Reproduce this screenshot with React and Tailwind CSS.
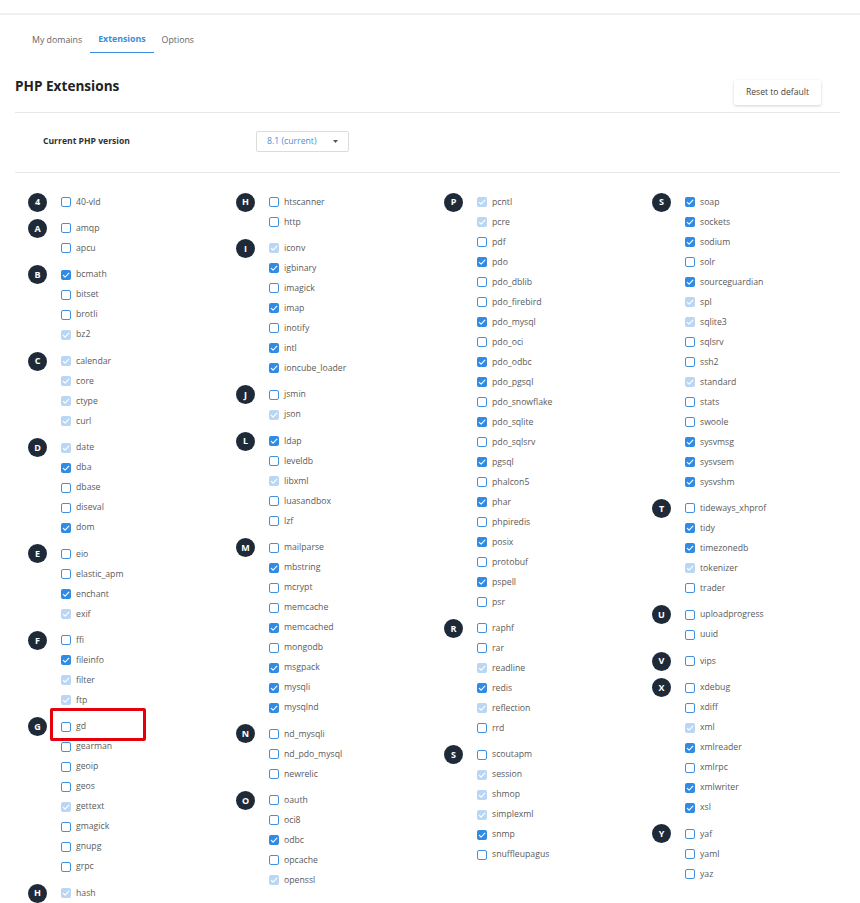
import React from "react";

const F = { fontFamily: '"Open Sans", "Noto Sans", sans-serif' };

const cols = [
  [
    ["4", "40-vld:0"],
    ["A", "amqp:0 apcu:0"],
    ["B", "bcmath:1 bitset:0 brotli:0 bz2:2"],
    ["C", "calendar:2 core:2 ctype:2 curl:2"],
    ["D", "date:2 dba:1 dbase:0 diseval:0 dom:1"],
    ["E", "eio:0 elastic_apm:0 enchant:1 exif:2"],
    ["F", "ffi:0 fileinfo:1 filter:2 ftp:2"],
    ["G", "gd:0 gearman:0 geoip:0 geos:0 gettext:2 gmagick:0 gnupg:0 grpc:0"],
    ["H", "hash:2"],
  ],
  [
    ["H", "htscanner:0 http:0"],
    ["I", "iconv:2 igbinary:1 imagick:0 imap:1 inotify:0 intl:1 ioncube_loader:1"],
    ["J", "jsmin:0 json:2"],
    ["L", "ldap:1 leveldb:0 libxml:2 luasandbox:0 lzf:0"],
    ["M", "mailparse:0 mbstring:1 mcrypt:0 memcache:0 memcached:1 mongodb:0 msgpack:1 mysqli:1 mysqlnd:1"],
    ["N", "nd_mysqli:0 nd_pdo_mysql:0 newrelic:0"],
    ["O", "oauth:0 oci8:0 odbc:1 opcache:0 openssl:2"],
  ],
  [
    ["P", "pcntl:2 pcre:2 pdf:0 pdo:1 pdo_dblib:0 pdo_firebird:0 pdo_mysql:1 pdo_oci:0 pdo_odbc:1 pdo_pgsql:1 pdo_snowflake:0 pdo_sqlite:1 pdo_sqlsrv:0 pgsql:1 phalcon5:0 phar:1 phpiredis:0 posix:1 protobuf:0 pspell:1 psr:0"],
    ["R", "raphf:0 rar:0 readline:2 redis:1 reflection:2 rrd:0"],
    ["S", "scoutapm:0 session:2 shmop:2 simplexml:2 snmp:1 snuffleupagus:0"],
  ],
  [
    ["S", "soap:1 sockets:1 sodium:1 solr:0 sourceguardian:1 spl:2 sqlite3:2 sqlsrv:0 ssh2:0 standard:2 stats:0 swoole:0 sysvmsg:1 sysvsem:1 sysvshm:1"],
    ["T", "tideways_xhprof:0 tidy:1 timezonedb:1 tokenizer:2 trader:0"],
    ["U", "uploadprogress:0 uuid:0"],
    ["V", "vips:0"],
    ["X", "xdebug:0 xdiff:0 xml:2 xmlreader:1 xmlrpc:0 xmlwriter:1 xsl:1"],
    ["Y", "yaf:0 yaml:0 yaz:0"],
  ],
];

function Box({ s }) {
  if (s === 0) {
    return <span className="w-[10px] h-[10px] rounded-[2px] border border-[#3f91dd] bg-white shrink-0" />;
  }
  const bg = s === 1 ? "bg-[#2f8be3]" : "bg-[#b9d7f4]";
  return (
    <span className={`w-[10px] h-[10px] rounded-[2px] ${bg} shrink-0 flex items-center justify-center`}>
      <svg width="10" height="10" viewBox="0 0 10 10">
        <path d="M2.3 5.3 L4.1 7.1 L7.9 3.1" fill="none" stroke="white" strokeWidth="1.1" strokeLinecap="round" strokeLinejoin="round" />
      </svg>
    </span>
  );
}

function Group({ letter, items }) {
  const list = items.split(" ").map((t) => {
    const [n, s] = t.split(":");
    return [n, Number(s)];
  });
  return (
    <div className="flex mb-[6.4px]">
      <div className="w-[19px] h-[19px] mt-[0.5px] rounded-full bg-[#1f2a38] text-white text-[9px] font-bold flex items-center justify-center shrink-0">
        {letter}
      </div>
      <div className="ml-[14px] flex flex-col">
        {list.map(([n, s]) => (
          <div key={n} className="h-5 flex items-center gap-[5px]">
            <Box s={s} />
            <span className="text-[8.7px] text-[#5a5a5a] leading-none">{n}</span>
          </div>
        ))}
      </div>
    </div>
  );
}

export default function App() {
  return (
    <div className="relative bg-white w-[860px] h-[903px] overflow-hidden" style={F}>
      <div className="h-[15px] border-b-2 border-[#efefef]" />
      <div className="pl-[24px] pt-[13px] flex text-[8.8px]">
        <div className="px-2 h-[25px] flex items-center text-[#666]">My domains</div>
        <div className="px-2 h-[25px] flex items-center text-[#3b8ddb] font-bold border-b border-[#3b8ddb]">Extensions</div>
        <div className="px-2 h-[25px] flex items-center text-[#666]">Options</div>
      </div>
      <div className="pl-[15px] pr-[20px]">
        <div className="flex justify-between items-start pt-[23px] pb-[7px] border-b border-[#e7e7e7]">
          <h2 className="text-[13.6px] leading-[20px] font-bold text-[#222]">PHP Extensions</h2>
          <button className="mt-[4px] mr-[19px] w-[87px] h-[25px] rounded-[2px] bg-white text-[8.6px] text-[#444] shadow-[0_1px_3px_rgba(0,0,0,0.18)]">
            Reset to default
          </button>
        </div>
        <div className="flex items-center h-[60px] pb-[2px] border-b border-[#e7e7e7]">
          <div className="pl-[28px] w-[241px] text-[8.6px] font-bold text-[#333]">Current PHP version</div>
          <div className="w-[93px] h-[21px] border border-[#dcdcdc] rounded-[2px] flex items-center justify-between pl-[10px] pr-[10px]">
            <span className="text-[8.7px] text-[#4a90d9]">8.1 (current)</span>
            <svg width="5" height="3" viewBox="0 0 5 3">
              <path d="M0 0 L5 0 L2.5 3 Z" fill="#555" />
            </svg>
          </div>
        </div>
      </div>
      <div className="pl-[28px] pt-[19px] grid grid-cols-[repeat(4,208px)]">
        {cols.map((c, i) => (
          <div key={i} className="flex flex-col">
            {c.map(([l, it], j) => (
              <Group key={j} letter={l} items={it} />
            ))}
          </div>
        ))}
      </div>
      <div className="absolute left-[50px] top-[708px] w-[96px] h-[33px] border-[3px] border-[#e6000c] rounded-[2px]" />
    </div>
  );
}
